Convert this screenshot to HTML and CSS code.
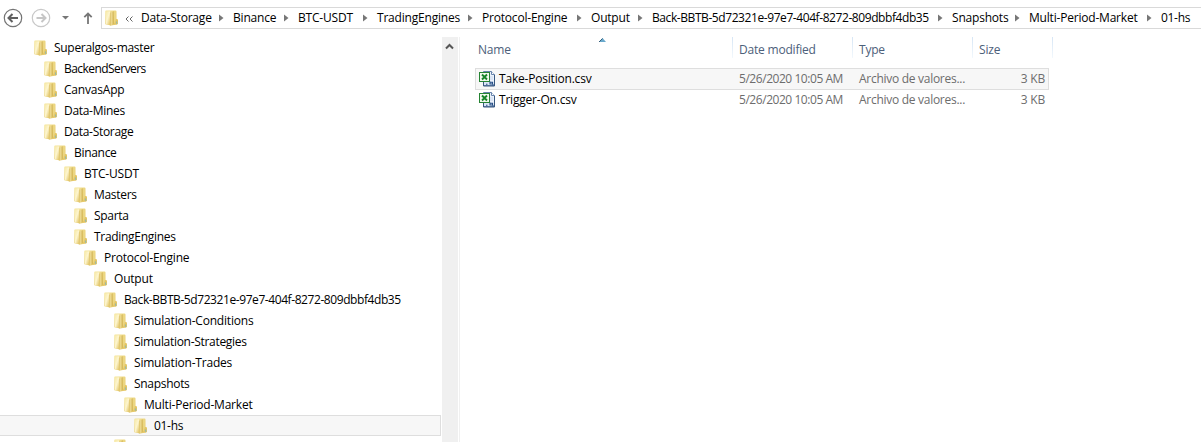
FILE: index.html
```html
<!DOCTYPE html>
<html lang="en">
<head>
<meta charset="utf-8">
<title>01-hs</title>
<link rel="stylesheet" href="styles.css">
</head>
<body>
<svg class="defs" width="0" height="0">
  <defs>
    <linearGradient id="gold" x1="0" x2="1" y1="0" y2="1"><stop offset="0" stop-color="#f6e79f"/><stop offset="1" stop-color="#e0c15c"/></linearGradient>
    <linearGradient id="leaf" x1="0" x2="1" y1="0" y2="1"><stop offset="0" stop-color="#f7eaa9"/><stop offset=".45" stop-color="#fdf5cf"/><stop offset="1" stop-color="#dfbf58"/></linearGradient>
    <linearGradient id="spine" x1="0" x2="1"><stop offset="0" stop-color="#dcc069"/><stop offset=".5" stop-color="#f0de98"/><stop offset="1" stop-color="#c8a846"/></linearGradient>
    <symbol id="folder" viewBox="0 0 14 16">
      <path d="M.3 1.200Q.3.500 1 .5H10.500Q11.500.5 11.500 1.500V9L12.800 9.500V14L10.500 14.800 6 15.500.3 14.200Z" fill="url(#gold)"/>
      <path d="M1 1.300H5.300V15.300L1 14.200Z" fill="url(#leaf)"/>
      <path d="M5.200 2.800 8.500 1.200V13.800L5.200 15.700Z" fill="url(#spine)"/>
      <path d="M9 1.500H11V9L9.500 13H9Z" fill="#ecd681"/>
      <path d="M11 9 12.900 9.700V14L10.700 14.800Z" fill="#e3c566"/>
      <path d="M11.700 11.500V13.800" stroke="#7db6c4" stroke-width=".9"/>
    </symbol>
    <symbol id="csv" viewBox="0 0 16 16">
      <path d="M4.500.5H12.500L15.500 3.500V14.500H4.500Z" fill="#eaf1fb" stroke="#6683ac"/>
      <path d="M12.500.5V3.500H15.500" fill="#fff" stroke="#6683ac"/>
      <path d="M11 6H14M11 8H14" stroke="#c8d6ec"/>
      <rect x=".5" y="1.500" width="10" height="9" fill="#f1f9ee" stroke="#258332"/>
      <path d="M3 3.500 8 8.500M8 3.500 3 8.500" stroke="#17852a" stroke-width="1.900"/>
      <path d="M5 11H15V14H5Z" fill="#dce6f5"/>
      <path d="M7 13.200H8.500M11 10.500V13H13.500V11.200H11M14 13V14.500" stroke="#274f87" stroke-width="1.100" fill="none"/>
      <path d="M4.500 11V15H15.500V4" stroke="#38577f" fill="none"/>
    </symbol>
    <symbol id="chev" viewBox="0 0 5 8"><path d="M0 .5 4.500 4 0 7.500Z" fill="#777"/></symbol>
  </defs>
</svg>
<header class="bar">
  <svg class="nav" width="101" height="37" fill="none">
    <circle cx="13" cy="18" r="8.700" stroke="#747474" stroke-width="1.200"/>
    <path d="M8.500 18H18M12.500 14 8.500 18 12.500 22" stroke="#606060" stroke-width="2"/>
    <circle cx="41" cy="18" r="8.700" stroke="#c8c8c8" stroke-width="1.200"/>
    <path d="M36.500 18H46M41.500 14 45.500 18 41.500 22" stroke="#c6c6c6" stroke-width="2"/>
    <path d="M62 16H69L65.500 19.500Z" fill="#777"/>
    <path d="M88 24V13.500M84.300 17.200 88 13.500 91.700 17.200" stroke="#777" stroke-width="1.800"/>
  </svg>
  <div class="address">
    <svg class="folder"><use href="#folder"/></svg>
    <svg class="more" viewBox="0 0 8 6" fill="none" stroke="#666"><path d="M3.500.5 1 3 3.500 5.500M7.500.5 5 3 7.500 5.500"/></svg>
    <nav class="crumbs">
      <span class="crumb"><b>Data-Storage</b><svg><use href="#chev"/></svg></span>
      <span class="crumb"><b>Binance</b><svg><use href="#chev"/></svg></span>
      <span class="crumb"><b>BTC-USDT</b><svg><use href="#chev"/></svg></span>
      <span class="crumb"><b>TradingEngines</b><svg><use href="#chev"/></svg></span>
      <span class="crumb"><b>Protocol-Engine</b><svg><use href="#chev"/></svg></span>
      <span class="crumb"><b>Output</b><svg><use href="#chev"/></svg></span>
      <span class="crumb"><b class="hash">Back-BBTB-5d72321e-97e7-404f-8272-809dbbf4db35</b><svg><use href="#chev"/></svg></span>
      <span class="crumb"><b>Snapshots</b><svg><use href="#chev"/></svg></span>
      <span class="crumb"><b>Multi-Period-Market</b><svg><use href="#chev"/></svg></span>
      <span class="crumb"><b class="snug">01-hs</b></span>
    </nav>
  </div>
</header>
<main class="panes">
  <div class="tree">
    <div class="node d0"><svg class="folder"><use href="#folder"/></svg><b class="snug">Superalgos-master</b></div>
    <div class="node d1"><svg class="folder"><use href="#folder"/></svg><b class="tight">BackendServers</b></div>
    <div class="node d1"><svg class="folder"><use href="#folder"/></svg><b>CanvasApp</b></div>
    <div class="node d1"><svg class="folder"><use href="#folder"/></svg><b class="snug">Data-Mines</b></div>
    <div class="node d1"><svg class="folder"><use href="#folder"/></svg><b class="snug">Data-Storage</b></div>
    <div class="node d2"><svg class="folder"><use href="#folder"/></svg><b class="snug">Binance</b></div>
    <div class="node d3"><svg class="folder"><use href="#folder"/></svg><b>BTC-USDT</b></div>
    <div class="node d4"><svg class="folder"><use href="#folder"/></svg><b class="snug">Masters</b></div>
    <div class="node d4"><svg class="folder"><use href="#folder"/></svg><b class="snug">Sparta</b></div>
    <div class="node d4"><svg class="folder"><use href="#folder"/></svg><b class="snug">TradingEngines</b></div>
    <div class="node d5"><svg class="folder"><use href="#folder"/></svg><b>Protocol-Engine</b></div>
    <div class="node d6"><svg class="folder"><use href="#folder"/></svg><b>Output</b></div>
    <div class="node d7"><svg class="folder"><use href="#folder"/></svg><b class="hash">Back-BBTB-5d72321e-97e7-404f-8272-809dbbf4db35</b></div>
    <div class="node d8"><svg class="folder"><use href="#folder"/></svg><b>Simulation-Conditions</b></div>
    <div class="node d8"><svg class="folder"><use href="#folder"/></svg><b class="snug">Simulation-Strategies</b></div>
    <div class="node d8"><svg class="folder"><use href="#folder"/></svg><b>Simulation-Trades</b></div>
    <div class="node d8"><svg class="folder"><use href="#folder"/></svg><b class="snug">Snapshots</b></div>
    <div class="node d9"><svg class="folder"><use href="#folder"/></svg><b>Multi-Period-Market</b></div>
    <div class="node d10 current"><svg class="folder"><use href="#folder"/></svg><b class="snug">01-hs</b></div>
    <div class="node d8"><svg class="folder"><use href="#folder"/></svg></div>
  </div>
  <div class="scroll"><svg width="16" height="18" fill="none"><path d="M4 11.500 7.500 8 11 11.500" stroke="#555" stroke-width="2"/></svg></div>
  <section class="files">
    <div class="head">
      <span>Name<svg class="sort" viewBox="0 0 7 4"><path d="M0 4 3.500 0 7 4Z" fill="#69a9cc"/><path d="M0 4 3.500.5" stroke="#345e7a"/></svg></span>
      <span>Date modified</span><span>Type</span><span>Size</span>
    </div>
    <div class="file current"><span class="name"><svg><use href="#csv"/></svg><b>Take-Position.csv</b></span><span class="date">5/26/2020 10:05 AM</span><span class="type">Archivo de valores...</span><span class="size">3 KB</span></div>
    <div class="file"><span class="name"><svg><use href="#csv"/></svg><b>Trigger-On.csv</b></span><span class="date">5/26/2020 10:05 AM</span><span class="type">Archivo de valores...</span><span class="size">3 KB</span></div>
  </section>
</main>
</body>
</html>
```
FILE: styles.css
```css
* { box-sizing: border-box; }
body {
  margin: 0;
  width: 1201px;
  height: 442px;
  overflow: hidden;
  background: #fff;
  color: #000;
  font: 12px/20px "Open Sans", "Noto Sans", sans-serif;
  letter-spacing: -0.2px;
  white-space: nowrap;
}
b { font-weight: 400; }
svg { display: block; flex: none; }
.defs { position: absolute; }
.bar { display: flex; height: 37px; }
.address {
  display: flex;
  align-items: center;
  width: 1110px;
  height: 22px;
  margin-top: 7px;
  padding-left: 3px;
  border: 1px solid #d9d9d9;
  flex: none;
}
.folder { width: 14px; height: 16px; }
.more { width: 8px; height: 6px; margin: 1px 12px 0 6px; }
.crumbs {
  display: grid;
  grid-template-columns: 92px 65px 79px 105px 109px 61px 300px 77px 132px 40px;
  margin-left: -4px;
}
.crumb { display: flex; align-items: center; justify-content: space-between; padding-right: 9px; }
.crumb svg { width: 5px; height: 8px; }
.hash { letter-spacing: -0.42px; }
.snug { letter-spacing: -0.3px; }
.tight { letter-spacing: -0.55px; }
.panes { display: flex; height: 405px; }
.tree { width: 442px; overflow: hidden; }
.node {
  display: flex;
  align-items: center;
  gap: 6px;
  width: 441px;
  height: 21px;
  padding-left: 34px;
}
.d1 { padding-left: 44px; }
.d2 { padding-left: 54px; }
.d3 { padding-left: 64px; }
.d4 { padding-left: 74px; }
.d5 { padding-left: 84px; }
.d6 { padding-left: 94px; }
.d7 { padding-left: 104px; }
.d8 { padding-left: 114px; }
.d9 { padding-left: 124px; }
.d10 { padding-left: 134px; }
.node.current { background: #f7f7f7; border: 1px solid #dedede; border-left: 0; }
.scroll { width: 16px; background: #f0f0f0; }
.files { flex: 1; margin-left: 1px; padding-left: 16px; border-left: 1px solid #f0f0f0; }
.head {
  display: grid;
  grid-template-columns: 257px 120px 120px 80px;
  height: 31px;
  color: #4c607a;
}
.head span {
  position: relative;
  height: 21px;
  padding: 3px 0 0 6px;
  border-right: 1px solid;
  border-image: linear-gradient(#d5e5f5, #f4f9fd) 1;
}
.head span:first-child { padding-left: 2px; }
.sort { position: absolute; left: 123px; top: 1px; width: 7px; height: 4px; }
.file {
  display: grid;
  grid-template-columns: 262px 120px 120px 66px;
  align-items: center;
  width: 574px;
  height: 21px;
  margin-left: -1px;
  padding-left: 1px;
  color: #6d6d6d;
  border: 1px solid transparent;
}
.file.current { height: 22px; margin-bottom: -1px; background: #f7f7f7; border-color: #dedede; }
.name { display: flex; align-items: center; gap: 4px; padding-left: 2px; color: #000; }
.name svg { width: 16px; height: 16px; }
.date { letter-spacing: -0.45px; }
.type { letter-spacing: -0.28px; }
.size { text-align: right; }
```
